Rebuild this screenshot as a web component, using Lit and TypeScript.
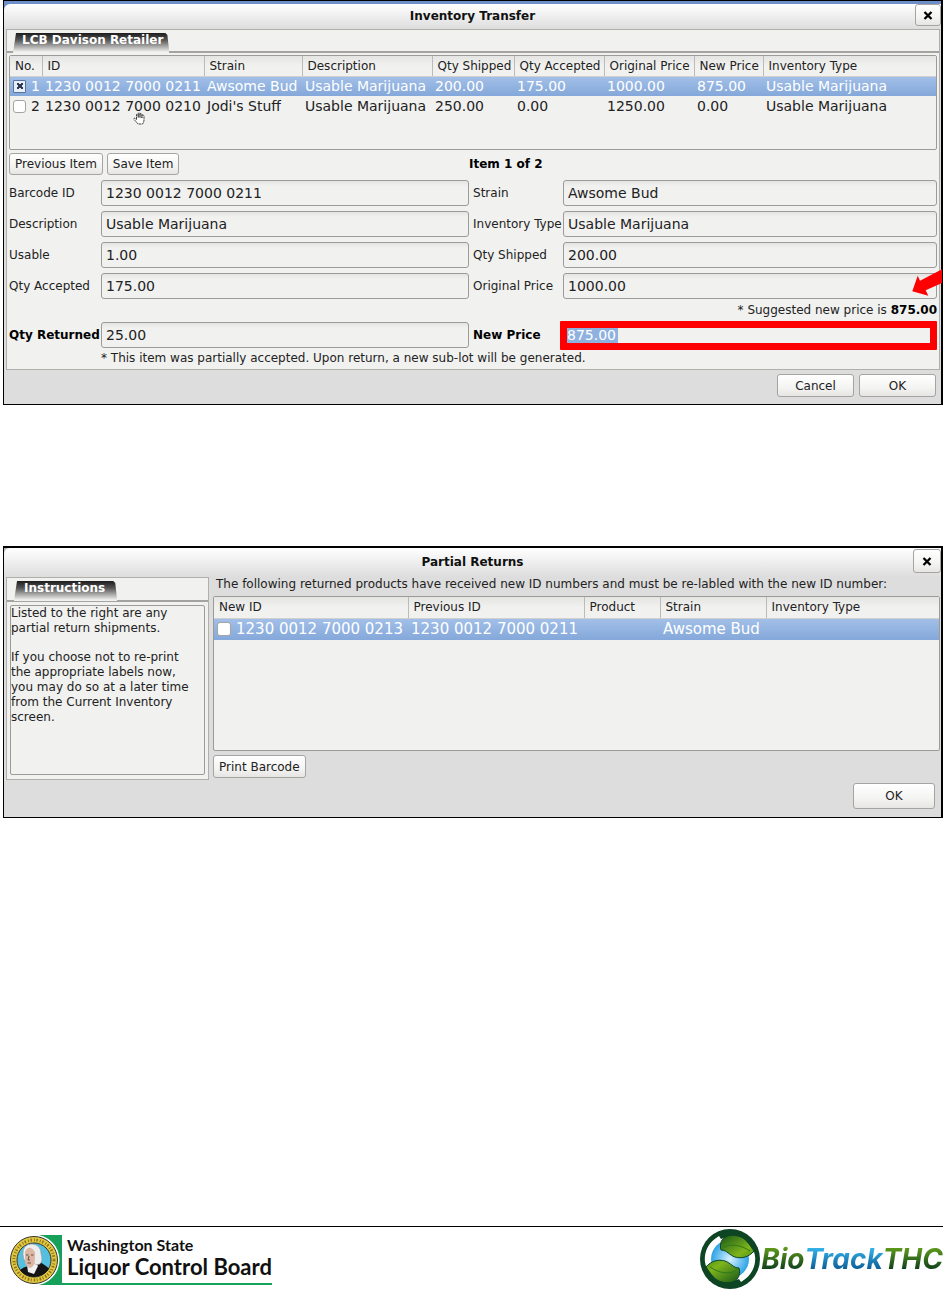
import { LitElement, html, css, svg, nothing } from "lit";
import { customElement, property } from "lit/decorators.js";

const controls = css`
  * {
    box-sizing: border-box;
  }
  button {
    font: 12px/14px "DejaVu Sans", sans-serif;
    color: #222;
    background: linear-gradient(#ffffff, #f4f4f3 60%, #e6e5e4);
    border: 1px solid #a5a4a1;
    border-radius: 3px;
    padding: 0 5px;
    margin: 0;
    white-space: nowrap;
  }
  input[type="checkbox"] {
    appearance: none;
    width: 13px;
    height: 13px;
    margin: 0;
    flex: none;
    background: #fff;
    border: 1px solid #a5a4a1;
    border-radius: 3px;
  }
  input[type="checkbox"]:checked {
    background: linear-gradient(45deg, transparent 38%, #2b3a52 38% 62%, transparent 62%) center / 6px 6px no-repeat,
      linear-gradient(-45deg, transparent 38%, #2b3a52 38% 62%, transparent 62%) center / 6px 6px no-repeat, #e8eef7;
    border-color: #54749f;
    border-radius: 1px;
  }
  table {
    width: 100%;
    border-collapse: collapse;
    table-layout: fixed;
  }
  th {
    font-weight: normal;
    text-align: left;
    color: #222;
    padding: 0 0 0 5px;
    background: linear-gradient(#e4e4e2, #f1f1f0 50%, #f1f1f0);
    border-right: 1px solid #bcbbb8;
    border-bottom: 1px solid #d0d0ce;
    white-space: nowrap;
  }
  th:last-child {
    border-right: 0;
  }
  td {
    padding: 0 0 0 3px;
    white-space: nowrap;
    color: #222;
  }
  tr.selected {
    background: linear-gradient(#a3c0e8, #84a8da);
  }
  tr.selected td {
    color: #fff;
  }
  .check {
    display: flex;
    align-items: center;
    gap: 5px;
  }
  .box {
    border: 1px solid #9c9b98;
    border-radius: 2px;
    background: #f1f1f0;
  }
`;

@customElement("dialog-window")
class DialogWindow extends LitElement {
  @property() heading = "";
  @property({ type: Boolean, reflect: true }) large = false;

  static styles = [
    controls,
    css`
      :host {
        display: flex;
        flex-direction: column;
        position: relative;
        border: 1px solid #000;
        border-right-width: 2px;
        background: #dddddd;
      }
      .desk {
        background: linear-gradient(#6e8fc9, #6480b4);
        padding-top: 3px;
      }
      .bar {
        display: grid;
        grid-template-columns: 26px 1fr 26px;
        align-items: start;
        height: 25px;
        background: linear-gradient(#ffffff, #dddddd);
        border-radius: 6px 0 0 0;
      }
      h2 {
        grid-column: 2;
        margin: 0;
        text-align: center;
        font: bold 12px/24px "DejaVu Sans", sans-serif;
        color: #111;
      }
      button {
        height: 22px;
        padding: 0;
        display: grid;
        place-items: center;
      }
      :host([large]) {
        border-top-width: 2px;
      }
      :host([large]) .desk {
        background: #b9b9b9;
        padding-top: 0;
      }
      :host([large]) .bar {
        grid-template-columns: 28px 1fr 28px;
        height: 29px;
      }
      :host([large]) h2 {
        line-height: 28px;
      }
      :host([large]) button {
        height: 24px;
        margin-top: 1px;
      }
    `,
  ];

  render() {
    return html`
      <div class="desk">
        <div class="bar">
          <h2>${this.heading}</h2>
          <button aria-label="Close">
            <svg width="10" height="9" viewBox="0 0 10 9">
              <path d="M1.500 1 8.500 8M8.500 1 1.500 8" stroke="#000" stroke-width="2.300" />
            </svg>
          </button>
        </div>
      </div>
      <slot></slot>
    `;
  }
}

interface Item {
  checked: boolean;
  cells: string[];
}

const columns: [string, number][] = [
  ["No.", 32],
  ["ID", 162],
  ["Strain", 98],
  ["Description", 130],
  ["Qty Shipped", 82],
  ["Qty Accepted", 90],
  ["Original Price", 90],
  ["New Price", 69],
  ["Inventory Type", 0],
];

const items: Item[] = [
  {
    checked: true,
    cells: ["1", "1230 0012 7000 0211", "Awsome Bud", "Usable Marijuana", "200.00", "175.00", "1000.00", "875.00", "Usable Marijuana"],
  },
  {
    checked: false,
    cells: ["2", "1230 0012 7000 0210", "Jodi's Stuff", "Usable Marijuana", "250.00", "0.00", "1250.00", "0.00", "Usable Marijuana"],
  },
];

const returnColumns: [string, number][] = [
  ["New ID", 194],
  ["Previous ID", 176],
  ["Product", 76],
  ["Strain", 106],
  ["Inventory Type", 0],
];

const fields: [string, string][] = [
  ["Barcode ID", "1230 0012 7000 0211"],
  ["Strain", "Awsome Bud"],
  ["Description", "Usable Marijuana"],
  ["Inventory Type", "Usable Marijuana"],
  ["Usable", "1.00"],
  ["Qty Shipped", "200.00"],
  ["Qty Accepted", "175.00"],
  ["Original Price", "1000.00"],
];

const colgroup = (cols: [string, number][]) => html`
  <colgroup>
    ${cols.map(([, w]) => html`<col style=${w ? `width:${w}px` : nothing} />`)}
  </colgroup>
`;

const leaf = svg`
  <path d="M22 22C19 11 28 5 39 8C47 10 50 16 55 23C50 29 43 31 36 29C30 27 28 22 22 22Z" fill="url(#leafFill)" stroke="#0d4524" />
  <path d="M24 20C32 15 42 17 51 23" fill="none" stroke="#2b7a1c" />
`;

@customElement("app-root")
class AppRoot extends LitElement {
  static styles = [
    controls,
    css`
      :host {
        display: flex;
        flex-direction: column;
        min-height: 100vh;
        background: #fff;
        font: 12px/14px "DejaVu Sans", sans-serif;
        color: #222;
      }
      dialog-window {
        margin: 0 1px 0 3px;
      }
      .returns {
        margin-top: 141px;
      }
      .panel {
        border: 1px solid #b0afac;
        background: #f1f1f0;
        margin: 0 1px 0 2px;
      }
      .tabs {
        height: 23px;
        padding: 3px 0 0 6px;
        border-bottom: 2px solid #a4a3a0;
      }
      .tab {
        display: inline-block;
        height: 20px;
        padding: 0 6px 0 9px;
        font-weight: bold;
        line-height: 15px;
        color: #fff;
        background: linear-gradient(#1c1c1c, #555 35%, #f1f1f0 95%);
        clip-path: polygon(3px 0, calc(100% - 4px) 0, calc(100% - 2px) 2px, 100% 100%, 0 100%);
      }
      .content {
        padding: 2px 2px 1px 2px;
      }
      .items {
        height: 95px;
        font-size: 14px;
        position: relative;
      }
      .items th {
        height: 20px;
        font-size: 12px;
      }
      .items td {
        height: 20px;
      }
      .hand {
        position: absolute;
        left: 123px;
        top: 56px;
      }
      .actions {
        display: grid;
        grid-template-columns: 92px 62fr 94px 63fr;
        align-items: center;
        padding: 3px 0 5px;
      }
      .actions div {
        grid-column: span 2;
        display: flex;
        gap: 4px;
      }
      .actions button {
        height: 22px;
      }
      .fields {
        display: grid;
        grid-template-columns: 92px 62fr 94px 63fr;
        grid-auto-rows: 26px;
        row-gap: 5px;
        align-items: center;
        position: relative;
      }
      label {
        white-space: nowrap;
      }
      label.second {
        padding-left: 4px;
      }
      .strong {
        font-weight: bold;
        color: #000;
      }
      input.text {
        width: 100%;
        height: 26px;
        font: 14px/16px "DejaVu Sans", sans-serif;
        color: #222;
        padding: 0 4px;
        border: 1px solid #9c9b98;
        border-radius: 3px;
        background: linear-gradient(#e4e4e2, #f1f1f0 5px);
      }
      .final {
        grid-auto-rows: 28px;
      }
      input.alert {
        width: calc(100% + 3px);
        height: 29px;
        margin-left: -3px;
        padding: 0;
        border: 7px solid #f00;
        border-radius: 1px;
        color: #fff;
        background: linear-gradient(#8fb1df, #8fb1df) 0 0 / 51px 100% no-repeat #f1f1f0;
      }
      .suggest {
        margin: 0;
        text-align: right;
        line-height: 22px;
      }
      .note {
        margin: 0 0 0 92px;
        line-height: 19px;
      }
      .arrow {
        position: absolute;
        right: -5px;
        top: 89px;
      }
      .foot {
        display: flex;
        justify-content: flex-end;
        gap: 5px;
        padding: 4px 5px 7px;
      }
      .foot button {
        width: 77px;
        height: 23px;
      }
      .body {
        display: grid;
        grid-template-columns: 203px 1fr;
        column-gap: 4px;
        padding: 0 1px 0 2px;
      }
      .body .panel {
        margin: 0;
      }
      .returns .tabs {
        height: 24px;
        padding-left: 7px;
      }
      .returns .tab {
        padding: 0 12px 0 10px;
      }
      .instructions {
        height: 170px;
        margin: 3px 3px 4px;
        padding-right: 8px;
        line-height: 15px;
      }
      .instructions p {
        margin: 0 0 14px;
      }
      .lead {
        margin: 0 0 4px;
        padding-left: 3px;
        line-height: 15px;
      }
      .list {
        height: 155px;
        font-size: 15px;
      }
      .list th {
        height: 21px;
      }
      .list th {
        font-size: 12px;
      }
      .list td {
        height: 22px;
      }
      .list input[type="checkbox"] {
        width: 14px;
        height: 14px;
      }
      .print {
        height: 23px;
        margin-top: 4px;
      }
      .returns .foot {
        padding: 3px 6px 8px;
      }
      .returns .foot button {
        width: 82px;
        height: 26px;
      }
      footer {
        margin: auto 1px 0 0;
        height: 65px;
        border-top: 1px solid #000;
        display: flex;
        justify-content: space-between;
      }
      .lcb {
        display: flex;
        align-items: flex-start;
        padding: 7px 0 0 9px;
      }
      .lcb div {
        height: 51px;
        padding: 0 0 0 5px;
        border-bottom: 2px solid #16a05a;
        font-family: Lato, sans-serif;
        font-weight: bold;
        color: #111;
        white-space: nowrap;
      }
      .state {
        display: block;
        font-size: 16px;
        line-height: 21px;
      }
      .board {
        display: block;
        font-size: 22px;
        line-height: 23px;
      }
      .bio {
        display: flex;
        align-items: flex-start;
        padding-top: 1px;
        font: italic bold 28px/62px Inter, sans-serif;
        white-space: nowrap;
      }
      .bio span {
        background: linear-gradient(#5f9a1c 32%, #0c3d1c 68%);
        background-clip: text;
        -webkit-background-clip: text;
        color: transparent;
      }
      .bio .track {
        background-image: linear-gradient(#35b4ea 32%, #0b5a92 68%);
      }
    `,
  ];

  private field(label: string, value: string, index: number) {
    const id = `field-${index}`;
    return html`
      <label for=${id} class=${index % 2 ? "second" : ""}>${label}</label>
      <input id=${id} class="text" .value=${value} readonly />
    `;
  }

  render() {
    return html`
      <dialog-window heading="Inventory Transfer">
        <section class="panel">
          <div class="tabs"><span class="tab">LCB Davison Retailer</span></div>
          <div class="content">
            <div class="items box">
              <table>
                ${colgroup(columns)}
                <thead>
                  <tr>
                    ${columns.map(([name]) => html`<th>${name}</th>`)}
                  </tr>
                </thead>
                <tbody>
                  ${items.map(
                    (item) => html`
                      <tr class=${item.checked ? "selected" : ""}>
                        ${item.cells.map((cell, i) =>
                          i
                            ? html`<td>${cell}</td>`
                            : html`<td>
                                <label class="check"><input type="checkbox" .checked=${item.checked} />${cell}</label>
                              </td>`
                        )}
                      </tr>
                    `
                  )}
                </tbody>
              </table>
              <svg class="hand" width="12" height="13" viewBox="0 0 12 13">
                <path
                  d="M3.500 7.500V3Q3.500 2 4.300 2T5.200 3V5.500 1.800Q5.200 1 6 1T7 1.800V5.500 2.300Q7 1.500 7.900 1.500T8.900 2.500V6 3.800Q9 3 9.900 3T11 4V8Q11 10 9.500 12H5Q3.500 10 1 7.500Q.6 6.300 1.500 6.200Z"
                  fill="#fff"
                  stroke="#111"
                  stroke-width=".8"
                  stroke-dasharray="2.500 .6"
                />
              </svg>
            </div>
            <div class="actions">
              <div><button>Previous Item</button><button>Save Item</button></div>
              <span class="strong">Item 1 of 2</span>
            </div>
            <div class="fields">
              ${fields.map(([label, value], i) => this.field(label, value, i))}
              <svg class="arrow" width="30" height="28" viewBox="912 269 30 28">
                <path
                  d="M912.300 291.300 917.700 275.700 920 280.700 942 269.200V283L925.700 290.300 928.300 295.700Z"
                  fill="#f00"
                />
              </svg>
            </div>
            <p class="suggest">* Suggested new price is <b class="strong">875.00</b></p>
            <div class="fields final">
              <label for="returned" class="strong">Qty Returned</label>
              <input id="returned" class="text" value="25.00" />
              <label for="price" class="strong second">New Price</label>
              <input id="price" class="text alert" value="875.00" />
            </div>
            <p class="note">* This item was partially accepted. Upon return, a new sub-lot will be generated.</p>
          </div>
        </section>
        <div class="foot"><button>Cancel</button><button>OK</button></div>
      </dialog-window>

      <dialog-window class="returns" heading="Partial Returns" large>
        <div class="body">
          <section class="panel">
            <div class="tabs"><span class="tab">Instructions</span></div>
            <div class="instructions box">
              <p>Listed to the right are any partial return shipments.</p>
              <p>
                If you choose not to re-print the appropriate labels now, you may do so at a later time from the Current
                Inventory screen.
              </p>
            </div>
          </section>
          <section>
            <p class="lead">
              The following returned products have received new ID numbers and must be re-labled with the new ID number:
            </p>
            <div class="list box">
              <table>
                ${colgroup(returnColumns)}
                <thead>
                  <tr>
                    ${returnColumns.map(([name]) => html`<th>${name}</th>`)}
                  </tr>
                </thead>
                <tbody>
                  <tr class="selected">
                    <td>
                      <label class="check"><input type="checkbox" />1230 0012 7000 0213</label>
                    </td>
                    <td>1230 0012 7000 0211</td>
                    <td></td>
                    <td>Awsome Bud</td>
                    <td></td>
                  </tr>
                </tbody>
              </table>
            </div>
            <button class="print">Print Barcode</button>
          </section>
        </div>
        <div class="foot"><button>OK</button></div>
      </dialog-window>

      <footer>
        <div class="lcb">
          <svg width="53" height="52" viewBox="0 0 53 52">
            <path d="M28 1H53V51H28Z" fill="#16a05a" />
            <circle cx="25" cy="26" r="25.500" fill="#fff" />
            <circle cx="25" cy="26" r="23.500" fill="#e3c83c" stroke="#333" />
            <circle cx="25" cy="26" r="20" fill="none" stroke="#8a7424" stroke-width="3" stroke-dasharray="1.500 2 1 1.500" />
            <circle cx="25" cy="26" r="17" fill="#56bfe0" stroke="#333" />
            <path d="M11 36Q14 33 20 32L31 28Q39 33 40 35Q34 43 25 43Q16 43 11 36Z" fill="#151515" />
            <path d="M18 31 19 38 25 40 29 32 27 29Z" fill="#f2f2f2" />
            <path d="M14 20Q14 10 23 10Q32 11 32 20Q34 27 31 30Q26 32 24 28L15 26Z" fill="#ededed" stroke="#999" stroke-width=".5" />
            <path d="M16 18Q18 13 22 14Q27 16 26 24Q26 33 21 34Q17 33 16 28Z" fill="#dcb8a4" />
            <path d="M17 21H19.500M22 21H24.500M18.500 29H22M20 22 19 26H21" fill="none" stroke="#5a4038" stroke-width=".9" />
          </svg>
          <div><span class="state">Washington State</span><span class="board">Liquor Control Board</span></div>
        </div>
        <div class="bio">
          <svg width="62" height="62" viewBox="0 0 62 62">
            <defs>
              <linearGradient id="leafFill" x1="0" y1="0" x2="1" y2="1">
                <stop offset="0" stop-color="#15561a" />
                <stop offset=".7" stop-color="#7fb51a" />
                <stop offset="1" stop-color="#4c8f1a" />
              </linearGradient>
              <radialGradient id="globe">
                <stop offset="0" stop-color="#d8f3ff" />
                <stop offset="1" stop-color="#2ba2e6" />
              </radialGradient>
            </defs>
            <circle cx="31" cy="31" r="30" fill="#0d4524" />
            <path d="M20 8C6 16 4 30 7 38L14 36L24 14ZM42 54C56 46 58 32 55 24L48 26L38 48Z" fill="#fff" />
            <circle cx="31" cy="31" r="22" fill="#fff" />
            <circle cx="31" cy="31" r="19" fill="url(#globe)" />
            ${leaf}
            <g transform="rotate(180 31 31)">${leaf}</g>
          </svg>
          <span>Bio</span><span class="track">Track</span><span>THC</span>
        </div>
      </footer>
    `;
  }
}
